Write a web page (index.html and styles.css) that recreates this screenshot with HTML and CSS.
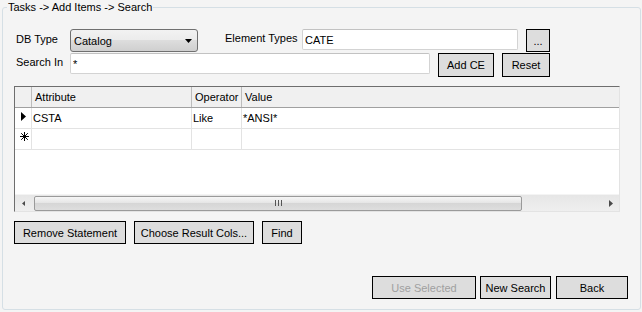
FILE: index.html
```html
<!DOCTYPE html>
<html lang="en">
<head>
  <meta charset="UTF-8">
  <title>Search</title>
  <link rel="stylesheet" href="styles.css">
</head>
<body>

  <fieldset class="group">
    <legend>Tasks -&gt; Add Items -&gt; Search</legend>
    <div class="panel">

      <div class="field-row">
        <label class="lbl lbl-short" for="db-type">DB Type</label>
        <div class="combo" id="db-type">
          <span>Catalog</span>
          <svg class="combo-arrow" width="7" height="4" viewBox="0 0 7 4"><polygon points="0,0 7,0 3.5,4" fill="#000"/></svg>
        </div>
        <label class="lbl lbl-types" for="types">Element Types</label>
        <input type="text" class="textbox tb-types" id="types" value="CATE">
        <button class="btn btn-dots">...</button>
      </div>

      <div class="field-row row-search">
        <label class="lbl lbl-short lbl-search" for="search-in">Search In</label>
        <input type="text" class="textbox tb-search" id="search-in" value="*">
        <button class="btn btn-add">Add CE</button>
        <button class="btn btn-reset">Reset</button>
      </div>

      <div class="grid">
        <div class="grid-head">
          <div class="cell rowhead"></div>
          <div class="cell col-attr">Attribute</div>
          <div class="cell col-op">Operator</div>
          <div class="cell col-val">Value</div>
        </div>
        <div class="grid-row">
          <div class="cell rowhead">
            <svg class="row-mark" width="5" height="9" viewBox="0 0 5 9"><polygon points="0,0 5,4.5 0,9" fill="#000"/></svg>
          </div>
          <div class="cell col-attr">CSTA</div>
          <div class="cell col-op">Like</div>
          <div class="cell col-val">*ANSI*</div>
        </div>
        <div class="grid-row">
          <div class="cell rowhead">
            <svg class="new-mark" width="9" height="9" viewBox="0 0 9 9">
              <path d="M4.5 0V9M0 4.5H9M1.2 1.2L7.8 7.8M7.8 1.2L1.2 7.8" stroke="#000" stroke-width="1"/>
            </svg>
          </div>
          <div class="cell col-attr"></div>
          <div class="cell col-op"></div>
          <div class="cell col-val"></div>
        </div>
        <div class="grid-empty"></div>
        <div class="hscroll">
          <div class="scroll-btn">
            <svg width="3" height="5" viewBox="0 0 3 5"><polygon points="3,0 0,2.5 3,5" fill="#4a4a4a"/></svg>
          </div>
          <div class="thumb">
            <svg width="7" height="6" viewBox="0 0 7 6"><path d="M0.5 0V6M3.5 0V6M6.5 0V6" stroke="#555" stroke-width="1"/></svg>
          </div>
          <div class="track"></div>
          <div class="scroll-btn">
            <svg width="4" height="7" viewBox="0 0 4 7"><polygon points="0,0 4,3.5 0,7" fill="#4a4a4a"/></svg>
          </div>
        </div>
      </div>

      <div class="actions">
        <button class="btn btn-remove">Remove Statement</button>
        <button class="btn btn-cols">Choose Result Cols...</button>
        <button class="btn btn-find">Find</button>
      </div>

      <div class="footer">
        <button class="btn btn-use" disabled>Use Selected</button>
        <button class="btn btn-new">New Search</button>
        <button class="btn btn-back">Back</button>
      </div>

    </div>
  </fieldset>

</body>
</html>
```

FILE: styles.css
```css
body {
  font-family: "Liberation Sans", Arial, sans-serif;
  font-size: 11px;
  background-color: #f4f4f4;
  color: #000;
  margin: 0;
  padding: 0;
}

.group {
  box-sizing: border-box;
  width: 639px;
  margin: 1px 0 0 2px;
  padding: 0;
  border: 1px solid #d5dfe5;
  border-radius: 3px;
}

.group legend {
  margin-left: 4px;
  padding: 0 1px;
  line-height: 13px;
  height: 13px;
}

.panel {
  padding: 15px 12px 10px 11px;
}

.field-row {
  display: flex;
  align-items: flex-start;
  padding-left: 2px;
  height: 23px;
}

.row-search {
  margin-top: 1px;
  height: 24px;
}

.lbl {
  line-height: 13px;
  padding-top: 4px;
}

.lbl-short {
  width: 54px;
}

.lbl-search {
  padding-top: 3px;
}

.lbl-types {
  width: 77px;
  margin-left: 27px;
  padding-top: 3px;
}

.combo {
  box-sizing: border-box;
  width: 128px;
  height: 23px;
  display: flex;
  align-items: center;
  justify-content: space-between;
  padding: 1px 5px 0 3px;
  border: 1px solid #707070;
  border-radius: 3px;
  background: linear-gradient(#f2f2f2, #ebebeb 50%, #dddddd 50%, #cfcfcf);
}

.combo-arrow {
  margin-top: -1px;
}

.textbox {
  box-sizing: border-box;
  height: 21px;
  margin: 0;
  padding: 1px 2px 0;
  border: 1px solid #d3d3d3;
  border-top-color: #c2c2c2;
  border-radius: 2px;
  background-color: #fff;
  font-family: inherit;
  font-size: 11px;
  color: #000;
  outline: none;
}

.tb-types {
  width: 216px;
}

.tb-search {
  width: 360px;
}

.btn {
  box-sizing: border-box;
  height: 23px;
  margin: 0;
  padding: 0;
  border: 1px solid #000;
  border-radius: 0;
  background-color: #dddddd;
  font-family: inherit;
  font-size: 11px;
  color: #000;
}

.btn:disabled {
  color: #a0a0a0;
}

.btn-dots {
  width: 24px;
  margin-left: 8px;
}

.btn-add {
  width: 56px;
  height: 24px;
  margin-left: 8px;
}

.btn-reset {
  width: 48px;
  height: 24px;
  margin-left: 8px;
}

/* data grid */
.grid {
  box-sizing: border-box;
  width: 606px;
  height: 126px;
  margin-top: 9px;
  display: flex;
  flex-direction: column;
  border-top: 1px solid #6e6e6e;
  border-left: 1px solid #6e6e6e;
  border-right: 1px solid #e3e3e3;
  border-bottom: 1px solid #e3e3e3;
  background-color: #fff;
}

.grid-head, .grid-row {
  display: flex;
  height: 21px;
  flex: none;
}

.grid-head {
  background-color: #f0f0f0;
  border-bottom: 1px solid #a0a0a0;
  box-sizing: border-box;
}

.grid-row {
  box-sizing: border-box;
  border-bottom: 1px solid #e3e3e3;
}

.cell {
  box-sizing: border-box;
  line-height: 20px;
  white-space: nowrap;
  overflow: hidden;
}

.grid-head .cell {
  padding-left: 3px;
  border-right: 1px solid #bcbcbc;
}

.grid-row .cell {
  padding-left: 1px;
  border-right: 1px solid #e3e3e3;
}

.cell.rowhead {
  width: 17px;
  padding: 0;
}

.grid-row .rowhead {
  padding-left: 6px;
}

.row-mark {
  display: block;
  margin-top: 4px;
}

.new-mark {
  display: block;
  margin: 3px 0 0 -1px;
}

.col-attr {
  width: 160px;
}

.col-op {
  width: 50px;
}

.grid .col-val {
  flex: 1;
  border-right: none;
}

.grid-empty {
  flex: 1;
}

.hscroll {
  height: 17px;
  flex: none;
  display: flex;
  align-items: center;
  background: linear-gradient(#e6e6e6, #efefef);
  border-top: 1px solid #f4f4f4;
  box-sizing: border-box;
}

.scroll-btn {
  width: 17px;
  height: 100%;
  display: flex;
  align-items: center;
  justify-content: center;
}

.thumb {
  box-sizing: border-box;
  width: 488px;
  height: 15px;
  margin-left: 2px;
  display: flex;
  align-items: center;
  justify-content: center;
  border: 1px solid #9a9a9a;
  border-radius: 2px;
  background: linear-gradient(#f6f6f6, #e4e4e4 50%, #d6d6d6 50%, #dedede);
}

.track {
  flex: 1;
}

.actions {
  display: flex;
  gap: 8px;
  margin-top: 9px;
}

.btn-remove {
  width: 112px;
}

.btn-cols {
  width: 120px;
}

.btn-find {
  width: 40px;
}

.footer {
  display: flex;
  justify-content: flex-end;
  margin-top: 32px;
}

.btn-use {
  width: 104px;
}

.btn-new {
  width: 71px;
  margin-left: 4px;
}

.btn-back {
  width: 72px;
  margin-left: 5px;
}
```
